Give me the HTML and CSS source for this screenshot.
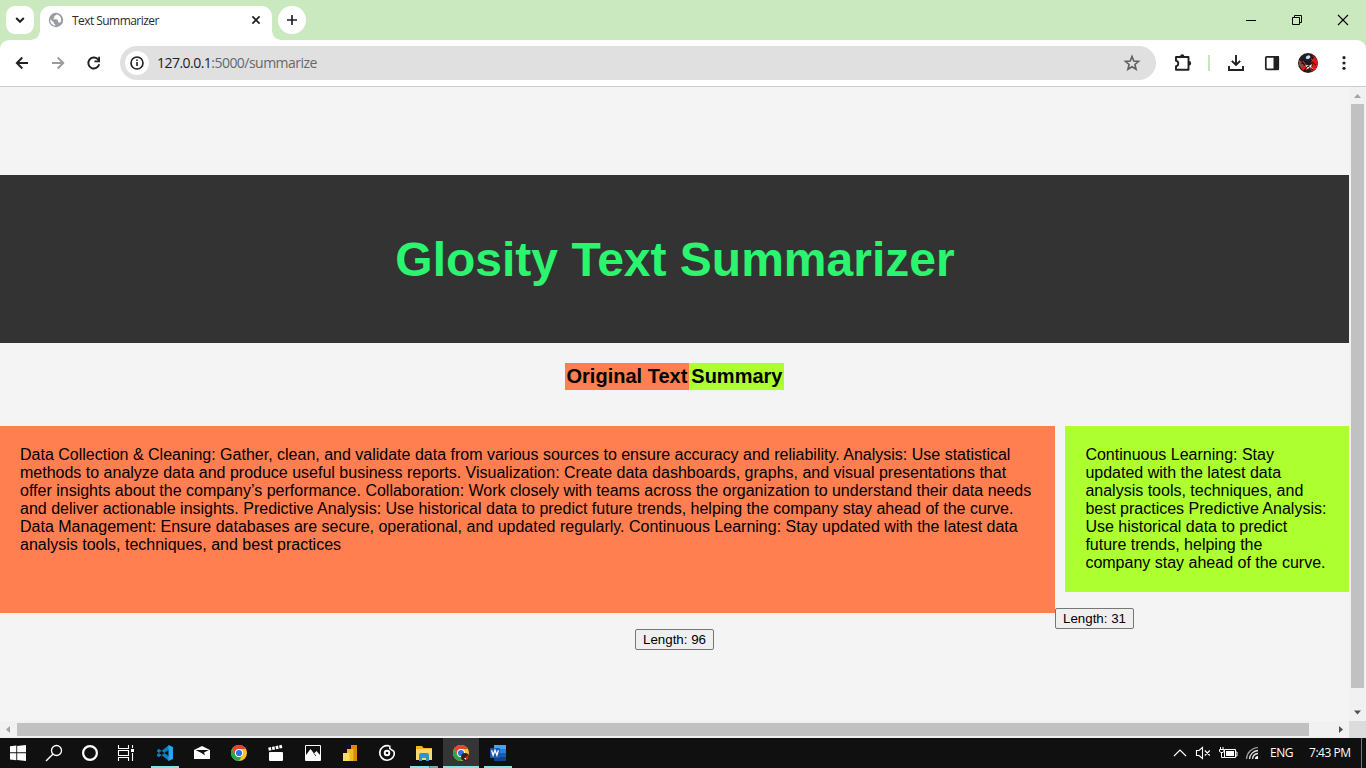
FILE: index.html
```html
<!DOCTYPE html>
<html lang="en">
<head>
<meta charset="utf-8">
<title>Text Summarizer</title>
<link rel="stylesheet" href="styles.css">
</head>
<body>
<div class="tabstrip">
  <div class="tab-search"><svg width="28" height="28" viewBox="0 0 28 28"><path d="M10.200 12l3.800 3.800 3.800-3.800" fill="none" stroke="#1f2023" stroke-width="2"/></svg></div>
  <div class="tab">
    <svg class="favicon" width="16" height="16" viewBox="0 0 16 16"><circle cx="8" cy="8" r="7.200" fill="#989ca3"/><path d="M9 2.200L6.300 4.300v1.500L4.800 7.300h4l1.400 1.500v1.600h2.200A5.600 5.600 0 0 0 9 2.200zM2.300 7.200l3.500 3.200v1.200l1.400 1v1.300A5.800 5.800 0 0 1 2.300 7.200z" fill="#fff"/></svg>
    <span class="tab-title">Text Summarizer</span>
    <svg class="tab-close" width="16" height="16" viewBox="0 0 16 16"><path d="M4.400 4.400l7.200 7.200M11.600 4.400l-7.200 7.200" stroke="#1f2023" stroke-width="1.700"/></svg>
  </div>
  <div class="new-tab"><svg width="28" height="28" viewBox="0 0 28 28"><path d="M14 9v10M9 14h10" stroke="#1f2023" stroke-width="1.700"/></svg></div>
  <div class="window-controls">
    <svg width="46" height="40" viewBox="0 0 46 40"><path d="M18 20.500h10" stroke="#000"/></svg>
    <svg width="46" height="40" viewBox="0 0 46 40"><path d="M18.500 17.500h7v7h-7zM20.500 17.500v-2h7v7h-2" fill="none" stroke="#000"/></svg>
    <svg width="46" height="40" viewBox="0 0 46 40"><path d="M18 15l10 10M28 15l-10 10" stroke="#000" stroke-width="1.100"/></svg>
  </div>
</div>
<div class="toolbar">
  <div class="nav">
    <svg width="36" height="36" viewBox="0 0 36 36"><path d="M24 18H13M18.300 12.500L12.800 18l5.500 5.500" fill="none" stroke="#1f2023" stroke-width="1.900"/></svg>
    <svg width="36" height="36" viewBox="0 0 36 36"><path d="M12 18h11M17.700 12.500l5.500 5.500-5.500 5.500" fill="none" stroke="#9b9b9c" stroke-width="1.900"/></svg>
    <svg width="36" height="36" viewBox="0 0 36 36"><path d="M23.200 19.300A5.500 5.500 0 1 1 21.800 14.200L23 15.500" fill="none" stroke="#1f2023" stroke-width="1.900"/><path d="M24 11.800v5.500h-5.500V15.500h3.700v-3.700z" fill="#1f2023"/></svg>
  </div>
  <div class="omnibox">
    <div class="site-info"><svg width="24" height="24" viewBox="0 0 24 24"><circle cx="12" cy="12" r="6" fill="none" stroke="#1f2023" stroke-width="1.600"/><path d="M12 11v4M12 8.500v1.500" stroke="#1f2023" stroke-width="1.600"/></svg></div>
    <span class="url"><span class="host">127.0.0.1</span>:5000/summarize</span>
    <svg class="star" width="24" height="24" viewBox="0 0 24 24"><path d="M12 5.500l1.800 4.500 4.800.4-3.700 3.100 1.200 4.700-4.100-2.500-4.100 2.500 1.200-4.700-3.700-3.100 4.800-.4z" fill="none" stroke="#5d6064" stroke-width="1.600"/></svg>
  </div>
  <div class="actions">
    <svg width="36" height="36" viewBox="0 0 36 36"><path d="M12 12h12.500v12.700H12v-3.500c3-.5 3-5 0-5.500z" fill="none" stroke="#1f2023" stroke-width="1.900" stroke-linejoin="round"/><path d="M16 11.500a2.200 2.200 0 0 1 4.400 0zM25 16a2.200 2.200 0 0 1 0 4.400z" fill="#1f2023"/></svg>
    <span class="divider"></span>
    <svg width="36" height="36" viewBox="0 0 36 36"><path d="M18 10v10M13.800 15.800L18 20l4.200-4.200M11 21v4h14v-4" fill="none" stroke="#1f2023" stroke-width="1.900"/></svg>
    <svg width="36" height="36" viewBox="0 0 36 36"><rect x="11.800" y="11.800" width="12.500" height="12.500" rx="1" fill="#fff" stroke="#1f2023" stroke-width="1.700"/><path d="M19.500 11h5.500v14h-5.500z" fill="#1f2023"/></svg>
    <svg width="36" height="36" viewBox="0 0 36 36"><circle cx="18" cy="18" r="10" fill="#30171a"/><path d="M22 10l4 3 2 5-2 6-4 3-2-3 3-4-2-4 3-3zM9 20l4 2 2-2 1 3-3 3z" fill="#df1717"/><path d="M12 11l5-2 4 2 1 4-4 3-5-3z" fill="#142238"/><ellipse cx="18" cy="12.200" rx="2.300" ry="1.700" transform="rotate(-25 18 12)" fill="#d6dce1"/><path d="M9 15l3 2 2 4-2 2-3-3z" fill="#7b523b"/><path d="M17 20l2 1 3-2-1 3 2 2-4-1-3 2 1-3-2-1z" fill="#fff"/><path d="M12 14l6 5 5-6M14 26l4-5 5 4M22 17l4 3M11 18l5 1" fill="none" stroke="#190e12"/><path d="M13 16l3 4M21 14l2 1M16 25l1-2" stroke="#e52e29"/></svg>
    <svg width="36" height="36" viewBox="0 0 36 36"><g fill="#1f2023"><circle cx="18" cy="12.700" r="1.600"/><circle cx="18" cy="18" r="1.600"/><circle cx="18" cy="23.300" r="1.600"/></g></svg>
  </div>
</div>
<div class="viewport">
  <main class="page">
    <header class="banner"><h1>Glosity Text Summarizer</h1></header>
    <div class="labels"><span class="label original">Original Text</span><span class="label summary">Summary</span></div>
    <div class="results">
      <section class="original-col">
        <div class="panel original">Data Collection &amp; Cleaning: Gather, clean, and validate data from various sources to ensure accuracy and reliability. Analysis: Use statistical<br>methods to analyze data and produce useful business reports. Visualization: Create data dashboards, graphs, and visual presentations that<br>offer insights about the company’s performance. Collaboration: Work closely with teams across the organization to understand their data needs<br>and deliver actionable insights. Predictive Analysis: Use historical data to predict future trends, helping the company stay ahead of the curve.<br>Data Management: Ensure databases are secure, operational, and updated regularly. Continuous Learning: Stay updated with the latest data<br>analysis tools, techniques, and best practices</div>
      </section>
      <section class="summary-col">
        <div class="panel summary">Continuous Learning: Stay<br>updated with the latest data<br>analysis tools, techniques, and<br>best practices Predictive Analysis:<br>Use historical data to predict<br>future trends, helping the<br>company stay ahead of the curve.</div>
        <button class="length">Length: 31</button>
      </section>
    </div>
    <div class="length-row"><button class="length">Length: 96</button></div>
  </main>
  <div class="vscroll">
    <svg width="17" height="17" viewBox="0 0 17 17"><path d="M5 11l3.500-4 3.500 4z" fill="#a3a3a3"/></svg>
    <div class="vthumb"></div>
    <svg class="down" width="17" height="17" viewBox="0 0 17 17"><path d="M5 6.500h7l-3.500 4z" fill="#505050"/></svg>
  </div>
  <div class="hscroll">
    <svg width="17" height="17" viewBox="0 0 17 17"><path d="M10 5v7L6 8.500z" fill="#a3a3a3"/></svg>
    <div class="hthumb"></div>
    <svg class="right" width="17" height="17" viewBox="0 0 17 17"><path d="M7 5v7l4-3.500z" fill="#505050"/></svg>
  </div>
  <div class="corner"></div>
</div>
<div class="taskbar">
  <div class="system">
    <svg viewBox="0 0 36 30"><path d="M10 8.300l6.300-.9v6.900H10zM17.200 7.900L26 7v7.300h-8.800zM10 15.300h6.300v7L10 21.500zM17.200 15.300H26V23l-8.800-1z" fill="#fff"/></svg>
    <svg viewBox="0 0 36 30"><circle cx="20.500" cy="12.500" r="5" fill="none" stroke="#fff" stroke-width="1.300"/><path d="M16.800 16.200L10 23" stroke="#fff" stroke-width="1.400"/></svg>
    <svg viewBox="0 0 36 30"><circle cx="18" cy="15" r="6.900" fill="none" stroke="#fff" stroke-width="2.200"/></svg>
    <svg viewBox="0 0 36 30"><path d="M10.500 7v3.500h10V7M10.500 23v-3.500h10V23M10.500 12.500h10v5h-10zM24.500 7v3M24.500 15v8" fill="none" stroke="#fff" stroke-width="1.100"/><path d="M23 11h3v3h-3z" fill="#fff"/></svg>
  </div>
  <div class="apps">
    <div class="app running"><svg viewBox="0 0 36 30"><path d="M10 12.300l1.800-1.500L22 18.500V23L10 13.500zM10 17.700l1.800 1.500L22 11.500V7L10 16.500z" fill="#087fc9"/><path d="M21.500 7L26 9v12l-4.500 2z" fill="#27a6ed"/></svg></div>
    <div class="app"><svg viewBox="0 0 36 30"><path d="M10 12l8-4 8 4v9H10z" fill="#fff"/><path d="M11.500 12h13.500l-5 2.500 1 3-3.500-2.500z" fill="#101010"/></svg></div>
    <div class="app"><svg viewBox="0 0 36 30"><circle cx="18" cy="15" r="8" fill="#fbc32c"/><path d="M11.070 11A8 8 0 0 1 24.930 11H18a4 4 0 0 0-3.460 6z" fill="#e54335"/><path d="M11.070 11A8 8 0 0 0 18 23l3.460-6A4 4 0 0 1 14.540 17z" fill="#2fa251"/><circle cx="18" cy="15" r="4" fill="#fff"/><circle cx="18" cy="15" r="3.100" fill="#2d73e8"/></svg></div>
    <div class="app"><svg viewBox="0 0 36 30"><rect x="11" y="14" width="14" height="9" rx="1" fill="#fff"/><path d="M10.500 11.200l14.500-3" stroke="#fff" stroke-width="3.200" stroke-dasharray="2.700 1"/></svg></div>
    <div class="app"><svg viewBox="0 0 36 30"><path d="M10.500 7.500h15v15h-15z" fill="none" stroke="#fff"/><path d="M11 17l4.500-6 3.500 4.500 2.500-2.500 3.500 4v5H11z" fill="#fff"/><path d="M19 15.500l2 2.500" fill="none" stroke="#101010" stroke-width=".8"/></svg></div>
    <div class="app"><svg viewBox="0 0 36 30"><path d="M19 7h6v16h-6z" fill="#d58c0b"/><path d="M15 11h6.500v12H15z" fill="#edbc27"/><path d="M11 15h6.500v8H11z" fill="#fbdc62"/></svg></div>
    <div class="app"><svg viewBox="0 0 36 30"><path d="M20 7.900A7.300 7.300 0 1 0 25.200 13.500" fill="none" stroke="#fff" stroke-width="1.700"/><circle cx="18" cy="15" r="2.300" fill="none" stroke="#fff" stroke-width="1.900"/><path d="M20.800 7.500v3.200l4.300 2.800" fill="none" stroke="#fff" stroke-width="1.500"/></svg></div>
    <div class="app running multiple"><svg viewBox="0 0 36 30"><path d="M10 8h6l1.500 2H26v12H10z" fill="#f3b51c"/><path d="M10 11h16v11H10z" fill="#ffda6b"/><path d="M13 23v-6q0-2 2-2h6q2 0 2 2v6h-3v-3h-4v3z" fill="#338fd9"/></svg></div>
    <div class="app running active"><svg viewBox="0 0 36 30"><circle cx="18" cy="15" r="8" fill="#fbc32c"/><path d="M11.070 11A8 8 0 0 1 24.930 11H18a4 4 0 0 0-3.460 6z" fill="#e54335"/><path d="M11.070 11A8 8 0 0 0 18 23l3.460-6A4 4 0 0 1 14.540 17z" fill="#2fa251"/><circle cx="18" cy="15" r="4" fill="#fff"/><circle cx="18" cy="15" r="3.100" fill="#2d73e8"/><circle cx="22" cy="19" r="3.900" fill="#391e1d"/><path d="M23 18.500l2-.5v3l-2 .5z" fill="#d51919" stroke="#df2723" stroke-width=".6"/><path d="M21 20h2v2z" fill="#fff"/></svg></div>
    <div class="app running"><svg viewBox="0 0 36 30"><path d="M14 7h12v4H14z" fill="#43a5ee"/><path d="M14 11h12v4H14z" fill="#2d80d7"/><path d="M14 15h12v4H14z" fill="#185abd"/><path d="M14 19h12v4H14z" fill="#11428b"/><rect x="10" y="10" width="10" height="10" rx=".7" fill="#1859b7"/><path d="M11.600 12.200l1.500 5 1.900-5 1.900 5 1.500-5" fill="none" stroke="#fff" stroke-width="1.300"/></svg></div>
  </div>
  <div class="tray">
    <svg width="22" height="30" viewBox="0 0 22 30"><path d="M5 18l6-6 6 6" fill="none" stroke="#fff" stroke-width="1.200"/></svg>
    <svg width="24" height="30" viewBox="0 0 24 30"><path d="M5.500 12.500h2.500l3.500-3v11l-3.500-3H5.500zM13.800 12.500l5 5M18.800 12.500l-5 5" fill="none" stroke="#fff" stroke-width="1.100"/></svg>
    <svg width="26" height="30" viewBox="0 0 26 30"><path d="M9.500 11.500h11v8h-11zM21 14h1v4h-1M5.500 9v2M8 9v2M4.500 11.500h4.500v2l-2.200 1.500-2.300-1.500zM6.500 14v5.500h3" fill="none" stroke="#fff"/><path d="M11 13h8v5h-8z" fill="#fff"/></svg>
    <svg width="24" height="30" viewBox="0 0 24 30"><path d="M5.500 21A12 12 0 0 1 17 9.500" fill="none" stroke="#a0a0a0" stroke-width="1.200"/><path d="M8.500 21A9 9 0 0 1 17 12.500M11.500 21a6 6 0 0 1 5.500-5.500" fill="none" stroke="#e3e3e3" stroke-width="1.300"/><path d="M14 21q0-3 3-3v3z" fill="#fff"/></svg>
    <span class="lang">ENG</span>
    <span class="clock">7:43 PM</span>
    <span class="show-desktop"></span>
  </div>
</div>
</body>
</html>
```
FILE: styles.css
```css
* { box-sizing: border-box; }
body {
  margin: 0;
  width: 1366px;
  height: 768px;
  overflow: hidden;
  display: flex;
  flex-direction: column;
  background: #f4f4f4;
  font-family: "Liberation Sans", Arial, sans-serif;
}
svg { display: block; flex: none; }

.tabstrip {
  height: 40px;
  flex: none;
  display: flex;
  align-items: center;
  padding-left: 6px;
  background: #cae9bf;
  font-family: "Open Sans", "Noto Sans", sans-serif;
}
.tab-search, .new-tab { width: 28px; height: 28px; background: #fff; }
.tab-search { border-radius: 9px; }
.new-tab { border-radius: 50%; margin-left: 6px; }
.tab {
  position: relative;
  display: flex;
  align-items: center;
  align-self: flex-end;
  width: 232px;
  height: 34px;
  margin-left: 6px;
  padding: 0 8px 6px;
  border-radius: 10px 10px 0 0;
  background: #fff;
}
.tab::before, .tab::after {
  content: "";
  position: absolute;
  bottom: 0;
  width: 9px;
  height: 9px;
}
.tab::before { left: -9px; background: radial-gradient(circle at 0 0, transparent 8.5px, #fff 9px); }
.tab::after { right: -9px; background: radial-gradient(circle at 100% 0, transparent 8.5px, #fff 9px); }
.tab-title { margin-left: 8px; font-size: 12px; letter-spacing: -.55px; color: #2b2c2e; }
.tab-close { margin-left: auto; }
.window-controls { display: flex; margin-left: auto; }

.toolbar {
  position: relative;
  height: 47px;
  flex: none;
  display: flex;
  align-items: center;
  padding: 0 4px;
  background: #cae9bf;
  border-bottom: 1px solid #cdcdcd;
}
.toolbar::before {
  content: "";
  position: absolute;
  inset: 0;
  background: #fff;
  border-radius: 9px 9px 0 0;
}
.toolbar > * { position: relative; }
.nav { display: flex; }
.omnibox {
  display: flex;
  align-items: center;
  width: 1036px;
  height: 34px;
  margin-left: 8px;
  padding: 0 12px 0 5px;
  border-radius: 17px;
  background: #e0e0e0;
}
.site-info { width: 24px; height: 24px; border-radius: 50%; background: #fff; }
.url {
  margin-left: 8px;
  padding-bottom: 2px;
  font: 14px "Open Sans", "Noto Sans", sans-serif;
  letter-spacing: -.53px;
  color: #66686b;
  white-space: nowrap;
}
.host { color: #1f2023; }
.star { margin-left: auto; }
.actions { display: flex; align-items: center; margin-left: 8px; }
.divider { width: 2px; height: 16px; margin: 0 8px; background: #c5e7ba; }

.viewport {
  height: 651px;
  flex: none;
  display: grid;
  grid-template-columns: 1349px 17px;
  grid-template-rows: 634px 17px;
}
.page { padding-top: 88px; color: #000; background: #f4f4f4; overflow: hidden; }
.banner {
  display: flex;
  align-items: center;
  justify-content: center;
  height: 168px;
  padding: 2px 0 0 1px;
  background: #333;
}
.banner h1 { margin: 0; font-size: 48px; line-height: 56px; color: #2bf56f; white-space: nowrap; }
.labels { display: flex; justify-content: center; margin-top: 20px; height: 27px; }
.label { padding: 2px; font-size: 20px; line-height: 23px; font-weight: bold; white-space: nowrap; }
.original { background: #ff7f50; }
.summary { background: #adff2f; }
.results { display: flex; margin-top: 36px; height: 203px; }
.original-col { width: 1055px; }
.summary-col { width: 294px; }
.panel { padding: 20px; font-size: 16px; line-height: 18px; white-space: nowrap; }
.panel.original { height: 187px; }
.panel.summary { margin-left: 10px; padding-left: 20.4px; height: 166px; }
.length {
  display: block;
  width: 79px;
  height: 21px;
  padding: 0;
  border: 1px solid #767676;
  border-radius: 2px;
  background: #efefef;
  color: #000;
  font: 13.333px "Liberation Sans", Arial, sans-serif;
}
.summary-col .length { margin-top: 16px; }
.length-row { display: flex; justify-content: center; }

.vscroll { display: flex; flex-direction: column; align-items: center; background: #f1f1f1; }
.vthumb { width: 13px; height: 584px; background: #c1c1c1; }
.down { margin-top: auto; }
.hscroll { display: flex; align-items: center; background: #f1f1f1; }
.hthumb { width: 1292px; height: 13px; background: #c1c1c1; }
.right { margin-left: auto; }
.corner { background: #dcdcdc; }

.taskbar { height: 30px; flex: none; display: flex; background: #101010; }
.system, .apps { display: flex; }
.system svg, .app svg { width: 36px; height: 30px; }
.apps { gap: 1px; margin-left: 3px; }
.app { position: relative; width: 36px; height: 30px; }
.running::after {
  content: "";
  position: absolute;
  left: 4px;
  right: 4px;
  bottom: 0;
  height: 2px;
  background: #86e2e8;
}
.active { background: #353535; }
.active::after { left: 0; right: 0; }
.multiple::after { background: linear-gradient(to right, #86e2e8 19px, #4d8b90 19px, #4d8b90 20px, #69adb2 20px); }
.tray {
  display: flex;
  align-items: center;
  margin-left: auto;
  color: #fff;
  font: 12px "Open Sans", "Noto Sans", sans-serif;
  white-space: nowrap;
}
.lang { width: 24px; margin-left: 5px; padding-bottom: 1px; letter-spacing: -.5px; }
.clock { width: 43px; margin-left: 15px; padding-bottom: 1px; letter-spacing: -.45px; }
.show-desktop { width: 5px; height: 30px; margin-left: 9px; border-left: 1px solid #777; }
```
